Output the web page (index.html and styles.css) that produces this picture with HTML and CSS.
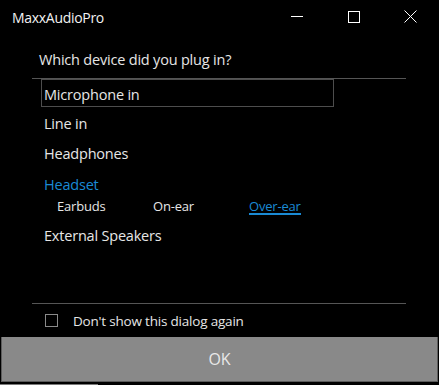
FILE: index.html
```html
<!DOCTYPE html>
<html lang="en">
<head>
    <meta charset="UTF-8">
    <title>MaxxAudioPro</title>
    <link rel="stylesheet" href="styles.css">
</head>
<body>
    <div class="window">
        <!-- Barra de título -->
        <div class="titlebar">
            <div class="title">MaxxAudioPro</div>
            <div class="controls">
                <div class="ctl">
                    <svg width="12" height="12" viewBox="0 0 12 12"><path d="M0 5.5h12" stroke="#fff" stroke-width="1"/></svg>
                </div>
                <div class="ctl">
                    <svg width="12" height="12" viewBox="0 0 12 12"><rect x="0.5" y="0.5" width="11" height="11" fill="none" stroke="#fff" stroke-width="1"/></svg>
                </div>
                <div class="ctl">
                    <svg width="13" height="13" viewBox="0 0 13 13"><path d="M0.5 0.5l12 12M12.5 0.5l-12 12" stroke="#fff" stroke-width="1"/></svg>
                </div>
            </div>
        </div>

        <div class="question">Which device did you plug in?</div>

        <!-- Lista de dispositivos -->
        <div class="panel">
            <div class="item selected">Microphone in</div>
            <div class="item">Line in</div>
            <div class="item">Headphones</div>
            <div class="item active">Headset</div>
            <div class="sub-options">
                <span class="sub">Earbuds</span>
                <span class="sub">On-ear</span>
                <span class="sub current">Over-ear</span>
            </div>
            <div class="item external">External Speakers</div>
        </div>

        <div class="check-row">
            <span class="checkbox"></span>
            <span class="check-label">Don't show this dialog again</span>
        </div>

        <button class="ok">OK</button>
        <div class="edge"></div>
    </div>
</body>
</html>
```

FILE: styles.css
```css
body {
    margin: 0;
    padding: 0;
    width: 439px;
    height: 385px;
    overflow: hidden;
    background-color: #000;
    color: #e6e6e6;
    font-family: "Open Sans", "Noto Sans", sans-serif;
}

.window {
    width: 439px;
    height: 385px;
}

/* Barra de título */
.titlebar {
    height: 34px;
    display: flex;
    justify-content: space-between;
    align-items: center;
}

.title {
    padding-left: 12px;
    font-size: 14px;
    color: #f2f2f2;
    letter-spacing: -0.3px;
}

.controls {
    display: flex;
    height: 34px;
}

.ctl {
    width: 57px;
    display: flex;
    justify-content: center;
    align-items: center;
    padding-bottom: 1px;
}

.question {
    height: 28px;
    padding: 16px 0 0 39px;
    line-height: 20px;
    font-size: 14.5px;
    letter-spacing: -0.2px;
}

/* Lista */
.panel {
    margin: 0 33px 0 32px;
    height: 224px;
    border-top: 1px solid #555;
    border-bottom: 1px solid #555;
}

.item {
    margin-left: 9px;
    width: 293px;
    height: 30px;
    padding-top: 2px;
    line-height: 28px;
    padding-left: 2px;
    font-size: 14.5px;
    letter-spacing: -0.2px;
    border: 1px solid transparent;
    box-sizing: border-box;
}

.item.selected {
    height: 28px;
    padding-top: 3px;
    line-height: 24px;
    border-color: #4d4d4d;
}

.item.active {
    margin-top: 1px;
    color: #1a8ad4;
}

.sub-options {
    display: flex;
    height: 16px;
    margin-top: 1px;
    padding-left: 25px;
    font-size: 13px;
    line-height: 14px;
    letter-spacing: -0.2px;
}

.sub {
    width: 96px;
}

.sub.current {
    width: auto;
    color: #1a8ad4;
    border-bottom: 2px solid #1a8ad4;
    height: 14px;
}

.item.external {
    margin-top: 2px;
    padding-top: 4px;
}

/* Rodapé */
.check-row {
    height: 33px;
    display: flex;
    align-items: center;
    padding-left: 45px;
    font-size: 13.5px;
    letter-spacing: -0.2px;
}

.checkbox {
    width: 11px;
    height: 11px;
    border: 1px solid #8a8a8a;
    margin-right: 15px;
}

.ok {
    display: block;
    margin-left: 1px;
    width: 437px;
    height: 45px;
    background-color: #898989;
    border: 1px solid #5c5c5c;
    border-top: none;
    color: #e8e8e8;
    font-family: "Open Sans", "Noto Sans", sans-serif;
    font-size: 16px;
    padding: 0;
}

.edge {
    margin-top: 2px;
    width: 98px;
    height: 1px;
    background-color: #7a7a7a;
}
```
